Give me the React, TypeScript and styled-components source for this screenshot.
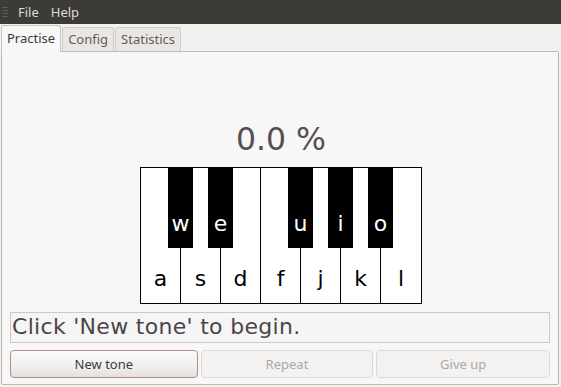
import React from "react";
import styled, { createGlobalStyle } from "styled-components";

const Global = createGlobalStyle`
  html, body { margin: 0; padding: 0; background: #f2f1f0; }
  * { box-sizing: border-box; }
`;

const Window = styled.div`
  width: 561px;
  height: 387px;
  display: flex;
  flex-direction: column;
  background: #f2f1f0;
  font-family: "Noto Sans", "DejaVu Sans", sans-serif;
  overflow: hidden;
`;

const MenuBar = styled.div`
  height: 24px;
  flex: 0 0 24px;
  background: #3c3b37;
  display: flex;
  align-items: center;
  padding-left: 2px;
`;

const Grip = styled.div`
  width: 6px;
  height: 10px;
  margin-right: 4px;
  background: repeating-linear-gradient(
    to bottom,
    #5a5954 0px,
    #5a5954 1px,
    transparent 1px,
    transparent 3px
  );
`;

const MenuItem = styled.div`
  color: #dfdbd2;
  font-size: 13px;
  padding: 0 6px;
  line-height: 24px;
`;

const TabBar = styled.div`
  height: 27px;
  flex: 0 0 27px;
  display: flex;
  align-items: flex-end;
  padding-left: 1px;
  position: relative;
  z-index: 1;
`;

const Tab = styled.div<{ $active?: boolean }>`
  height: ${(p) => (p.$active ? "27px" : "24px")};
  margin-right: 1px;
  padding: 0 ${(p) => (p.$active ? "5px" : "5px")};
  border: 1px solid ${(p) => (p.$active ? "#c8c4c0" : "#cfcbc7")};
  border-bottom: none;
  border-radius: 3px 3px 0 0;
  background: ${(p) => (p.$active ? "#f7f7f7" : "#e9e7e5")};
  color: ${(p) => (p.$active ? "#3c3c3c" : "#6a5a56")};
  font-size: 13px;
  line-height: ${(p) => (p.$active ? "25px" : "23px")};
  margin-bottom: ${(p) => (p.$active ? "-1px" : "0")};
`;

const Panel = styled.div`
  flex: 1;
  margin: 0 2px 2px 1px;
  border: 1px solid #bdb9b5;
  border-radius: 0 2px 2px 2px;
  background: #f7f7f7;
  display: flex;
  flex-direction: column;
  align-items: center;
  padding: 0 8px;
`;

const Percent = styled.div`
  margin-top: 69px;
  margin-left: 2px;
  height: 36px;
  line-height: 36px;
  font-family: "DejaVu Sans", sans-serif;
  font-size: 31.5px;
  color: #574d52;
`;

const Piano = styled.div`
  margin-top: 10px;
  margin-left: 2px;
  width: 282px;
  height: 137px;
  border: 1px solid #000;
  position: relative;
  display: flex;
  background: #fff;
`;

const WhiteKey = styled.div<{ $last?: boolean }>`
  width: 40px;
  height: 100%;
  border-right: ${(p) => (p.$last ? "none" : "1px solid #000")};
  display: flex;
  align-items: flex-end;
  justify-content: center;
  padding-bottom: 12px;
  font-family: "DejaVu Sans", sans-serif;
  font-size: 22px;
  color: #000;
`;

const BlackKey = styled.div<{ $left: number }>`
  position: absolute;
  top: -1px;
  left: ${(p) => p.$left}px;
  width: 25px;
  height: 81px;
  background: #000;
  color: #fff;
  display: flex;
  align-items: flex-end;
  justify-content: center;
  padding-bottom: 12px;
  font-family: "DejaVu Sans", sans-serif;
  font-size: 22px;
`;

const Entry = styled.div`
  margin-top: 8px;
  align-self: stretch;
  height: 31px;
  border: 1px solid #cdc9c5;
  background: #f5f5f5;
  padding-left: 1px;
  font-family: "DejaVu Sans", sans-serif;
  font-size: 22px;
  letter-spacing: 0.3px;
  line-height: 28px;
  color: #4c4448;
  white-space: nowrap;
`;

const ButtonRow = styled.div`
  margin-top: 7px;
  align-self: stretch;
  display: flex;
  gap: 3px;
`;

const Button = styled.div<{ $disabled?: boolean; $w: number }>`
  width: ${(p) => p.$w}px;
  height: 28px;
  border-radius: 4px;
  border: 1px solid ${(p) => (p.$disabled ? "#dcd8d5" : "#b28e80")};
  background: ${(p) =>
    p.$disabled
      ? "#f3f2f1"
      : "linear-gradient(to bottom, #fbfafa 0%, #f0efee 60%, #e3e1df 100%)"};
  color: ${(p) => (p.$disabled ? "#a9a7a5" : "#3c3c3c")};
  font-size: 13px;
  display: flex;
  align-items: center;
  justify-content: center;
`;

const whiteKeys = ["a", "s", "d", "f", "j", "k", "l"];
const blackKeys: [string, number][] = [
  ["w", 27],
  ["e", 67],
  ["u", 147],
  ["i", 187],
  ["o", 227],
];

export default function App() {
  return (
    <Window>
      <Global />
      <MenuBar>
        <Grip />
        <MenuItem>File</MenuItem>
        <MenuItem>Help</MenuItem>
      </MenuBar>
      <TabBar>
        <Tab $active>Practise</Tab>
        <Tab>Config</Tab>
        <Tab>Statistics</Tab>
      </TabBar>
      <Panel>
        <Percent>0.0 %</Percent>
        <Piano>
          {whiteKeys.map((k, i) => (
            <WhiteKey key={k} $last={i === whiteKeys.length - 1}>
              {k}
            </WhiteKey>
          ))}
          {blackKeys.map(([k, left]) => (
            <BlackKey key={k} $left={left}>
              {k}
            </BlackKey>
          ))}
        </Piano>
        <Entry>Click 'New tone' to begin.</Entry>
        <ButtonRow>
          <Button $w={188}>New tone</Button>
          <Button $w={173} $disabled>
            Repeat
          </Button>
          <Button $w={174} $disabled>
            Give up
          </Button>
        </ButtonRow>
      </Panel>
    </Window>
  );
}
